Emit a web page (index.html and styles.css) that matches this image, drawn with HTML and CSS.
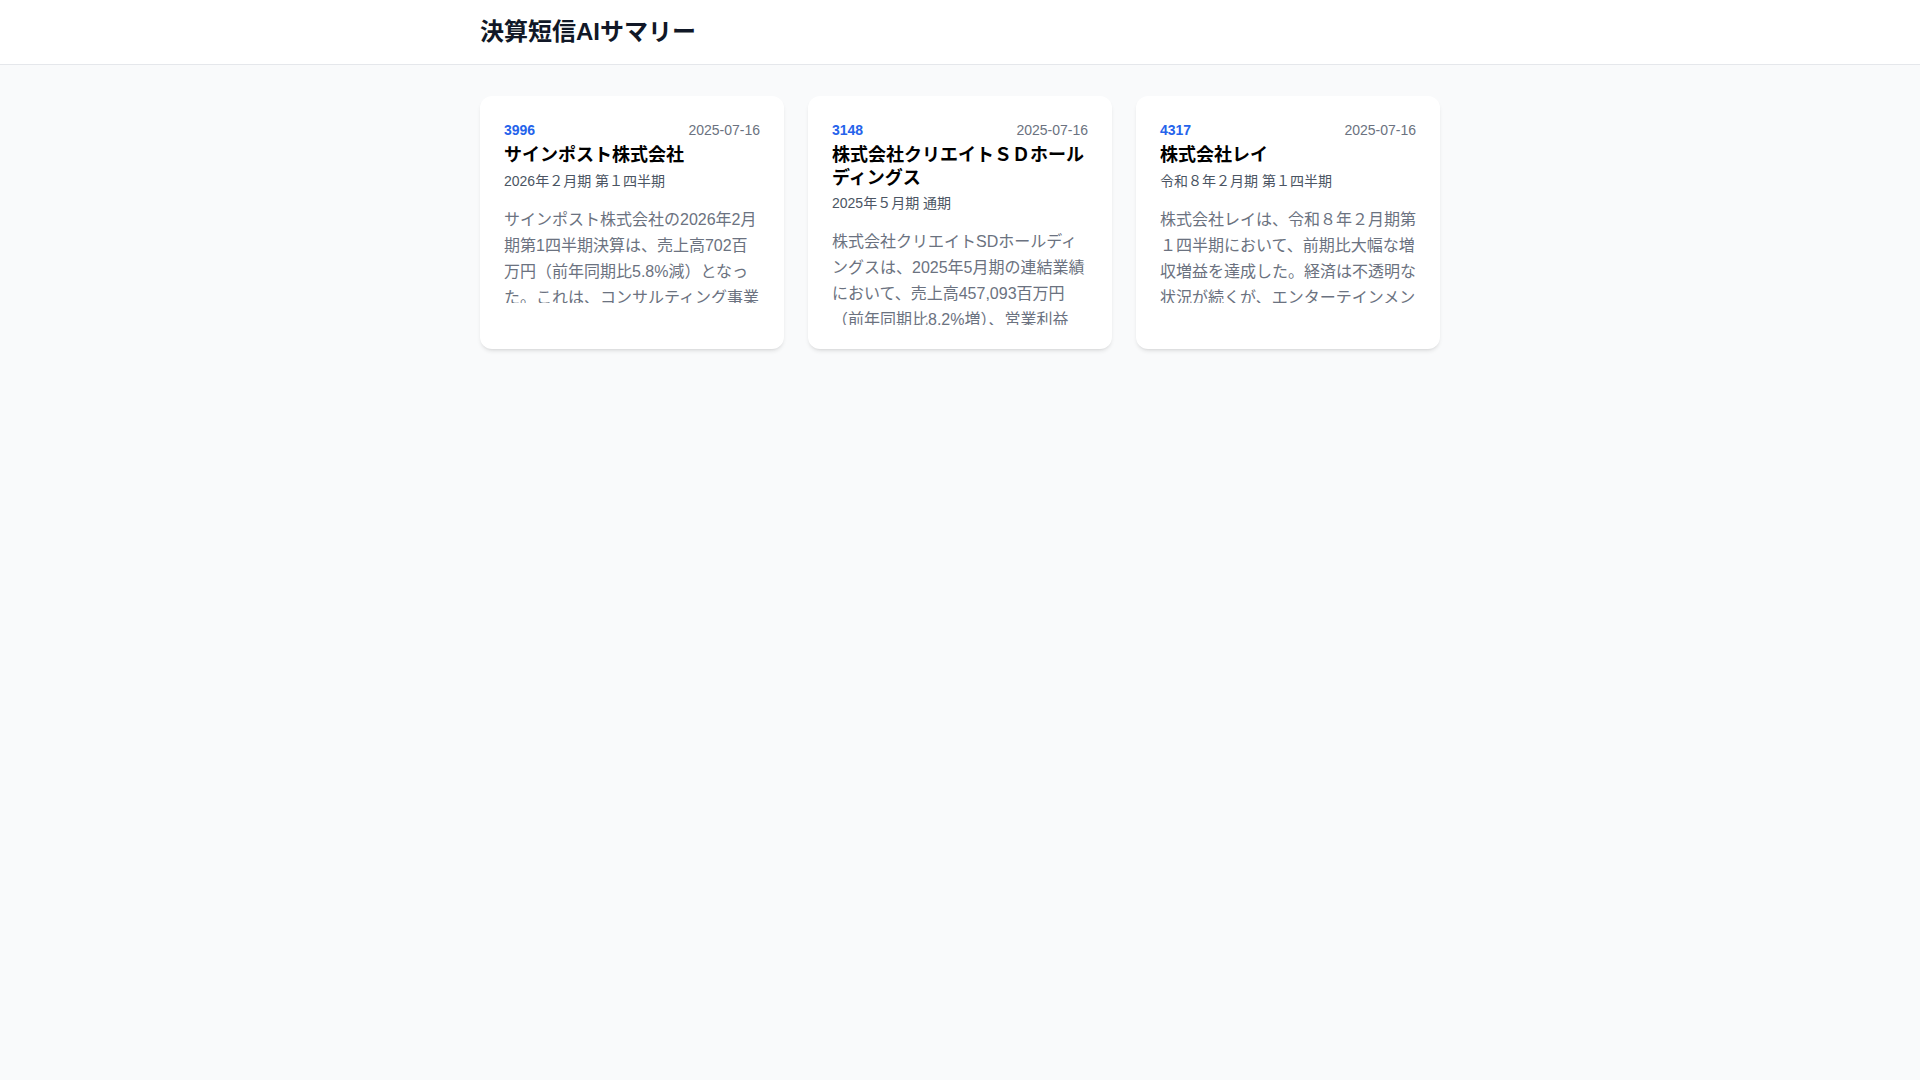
FILE: index.html
```html
<!DOCTYPE html>
<html lang="ja">
<head>
  <meta charset="utf-8">
  <title>決算短信AIサマリー</title>
  <link rel="stylesheet" href="styles.css">
</head>
<body>
  <header class="site-header">
    <div class="inner">
      <h1 class="site-title">決算短信AIサマリー</h1>
    </div>
  </header>

  <main class="inner main">
    <div class="card-grid">
      <article class="card">
        <div class="card-top">
          <span class="code">3996</span>
          <span class="date">2025-07-16</span>
        </div>
        <h2 class="company">サインポスト株式会社</h2>
        <div class="period">2026年２月期 第１四半期</div>
        <p class="summary">サインポスト株式会社の2026年2月期第1四半期決算は、売上高702百万円（前年同期比5.8%減）となった。これは、コンサルティング事業における大型案件の終了によるものである。</p>
      </article>

      <article class="card">
        <div class="card-top">
          <span class="code">3148</span>
          <span class="date">2025-07-16</span>
        </div>
        <h2 class="company">株式会社クリエイトＳＤホールディングス</h2>
        <div class="period">2025年５月期 通期</div>
        <p class="summary">株式会社クリエイトSDホールディングスは、2025年5月期の連結業績において、売上高457,093百万円（前年同期比8.2%増）、営業利益21,180百万円（同5.1%増）となり、増収増益を達成した。</p>
      </article>

      <article class="card">
        <div class="card-top">
          <span class="code">4317</span>
          <span class="date">2025-07-16</span>
        </div>
        <h2 class="company">株式会社レイ</h2>
        <div class="period">令和８年２月期 第１四半期</div>
        <p class="summary">株式会社レイは、令和８年２月期第１四半期において、前期比大幅な増収増益を達成した。経済は不透明な状況が続くが、エンターテインメント業界の需要は堅調に推移した。</p>
      </article>
    </div>
  </main>
</body>
</html>
```

FILE: styles.css
```css
* {
  margin: 0;
  padding: 0;
  box-sizing: border-box;
}

body {
  background: #f9fafb;
  color: #111827;
  font-family: "Liberation Sans", "Noto Sans CJK JP", sans-serif;
  min-height: 100vh;
}

.inner {
  max-width: 1024px;
  margin: 0 auto;
  padding: 0 32px;
}

/* header */
.site-header {
  background: #ffffff;
  border-bottom: 1px solid #e5e7eb;
}

.site-header .inner {
  padding-top: 16px;
  padding-bottom: 16px;
}

.site-title {
  font-size: 24px;
  line-height: 32px;
  font-weight: 700;
  color: #111827;
}

/* cards */
.main {
  padding-top: 31px;
  padding-bottom: 32px;
}

.card-grid {
  display: grid;
  grid-template-columns: repeat(3, 1fr);
  gap: 24px;
}

.card {
  background: #ffffff;
  border-radius: 12px;
  padding: 24px;
  box-shadow: 0 3px 4px -1px rgba(0, 0, 0, 0.1), 0 2px 3px -2px rgba(0, 0, 0, 0.1);
}

.card-top {
  display: flex;
  justify-content: space-between;
  align-items: center;
  font-size: 14px;
  line-height: 20px;
  margin-bottom: 4px;
}

.code {
  color: #2563eb;
  font-weight: 700;
}

.date {
  color: #6b7280;
}

.company {
  font-size: 18px;
  line-height: 22.5px;
  font-weight: 700;
  color: #000000;
}

.period {
  margin-top: 4px;
  font-size: 14px;
  line-height: 20px;
  color: #4b5563;
}

.summary {
  margin-top: 16px;
  font-size: 16px;
  line-height: 26px;
  color: #6b7280;
  max-height: 96px;
  overflow: hidden;
}
```
